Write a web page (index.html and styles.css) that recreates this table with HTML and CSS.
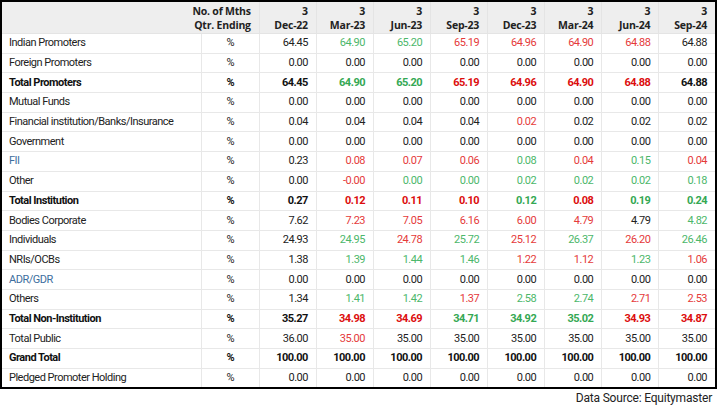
FILE: index.html
```html
<!DOCTYPE html>
<html>
<head>
<meta charset="utf-8">
<link rel="stylesheet" href="styles.css">
</head>
<body>
<div class="wrap">
<table class="sh">
<colgroup>
<col class="c-label"><col class="c-unit"><col class="c-num"><col class="c-num"><col class="c-num"><col class="c-num"><col class="c-num"><col class="c-num"><col class="c-num"><col class="c-num">
</colgroup>
<thead>
<tr>
<th colspan="2" class="unit-h">No. of Mths<br>Qtr. Ending</th>
<th>3<br>Dec-22</th><th>3<br>Mar-23</th><th>3<br>Jun-23</th><th>3<br>Sep-23</th><th>3<br>Dec-23</th><th>3<br>Mar-24</th><th>3<br>Jun-24</th><th>3<br>Sep-24</th>
</tr>
</thead>
<tbody>
<tr><td>Indian Promoters</td><td>%</td><td>64.45</td><td class="g">64.90</td><td class="g">65.20</td><td class="r">65.19</td><td class="r">64.96</td><td class="r">64.90</td><td class="r">64.88</td><td>64.88</td></tr>
<tr><td>Foreign Promoters</td><td>%</td><td>0.00</td><td>0.00</td><td>0.00</td><td>0.00</td><td>0.00</td><td>0.00</td><td>0.00</td><td>0.00</td></tr>
<tr class="tot"><td>Total Promoters</td><td>%</td><td>64.45</td><td class="g">64.90</td><td class="g">65.20</td><td class="r">65.19</td><td class="r">64.96</td><td class="r">64.90</td><td class="r">64.88</td><td>64.88</td></tr>
<tr><td>Mutual Funds</td><td>%</td><td>0.00</td><td>0.00</td><td>0.00</td><td>0.00</td><td>0.00</td><td>0.00</td><td>0.00</td><td>0.00</td></tr>
<tr><td>Financial institution/Banks/Insurance</td><td>%</td><td>0.04</td><td>0.04</td><td>0.04</td><td>0.04</td><td class="r">0.02</td><td>0.02</td><td>0.02</td><td>0.02</td></tr>
<tr><td>Government</td><td>%</td><td>0.00</td><td>0.00</td><td>0.00</td><td>0.00</td><td>0.00</td><td>0.00</td><td>0.00</td><td>0.00</td></tr>
<tr><td class="lnk">FII</td><td>%</td><td>0.23</td><td class="r">0.08</td><td class="r">0.07</td><td class="r">0.06</td><td class="g">0.08</td><td class="r">0.04</td><td class="g">0.15</td><td class="r">0.04</td></tr>
<tr><td>Other</td><td>%</td><td>0.00</td><td class="r">-0.00</td><td class="g">0.00</td><td class="g">0.00</td><td class="g">0.02</td><td class="g">0.02</td><td class="g">0.02</td><td class="g">0.18</td></tr>
<tr class="tot"><td>Total Institution</td><td>%</td><td>0.27</td><td class="r">0.12</td><td class="r">0.11</td><td class="r">0.10</td><td class="g">0.12</td><td class="r">0.08</td><td class="g">0.19</td><td class="g">0.24</td></tr>
<tr><td>Bodies Corporate</td><td>%</td><td>7.62</td><td class="r">7.23</td><td class="r">7.05</td><td class="r">6.16</td><td class="r">6.00</td><td class="r">4.79</td><td>4.79</td><td class="g">4.82</td></tr>
<tr><td>Individuals</td><td>%</td><td>24.93</td><td class="g">24.95</td><td class="r">24.78</td><td class="g">25.72</td><td class="r">25.12</td><td class="g">26.37</td><td class="r">26.20</td><td class="g">26.46</td></tr>
<tr><td>NRIs/OCBs</td><td>%</td><td>1.38</td><td class="g">1.39</td><td class="g">1.44</td><td class="g">1.46</td><td class="r">1.22</td><td class="r">1.12</td><td class="g">1.23</td><td class="r">1.06</td></tr>
<tr><td class="lnk">ADR/GDR</td><td>%</td><td>0.00</td><td>0.00</td><td>0.00</td><td>0.00</td><td>0.00</td><td>0.00</td><td>0.00</td><td>0.00</td></tr>
<tr><td>Others</td><td>%</td><td>1.34</td><td class="g">1.41</td><td class="g">1.42</td><td class="r">1.37</td><td class="g">2.58</td><td class="g">2.74</td><td class="r">2.71</td><td class="r">2.53</td></tr>
<tr class="tot"><td>Total Non-Institution</td><td>%</td><td>35.27</td><td class="r">34.98</td><td class="r">34.69</td><td class="g">34.71</td><td class="g">34.92</td><td class="g">35.02</td><td class="r">34.93</td><td class="r">34.87</td></tr>
<tr><td>Total Public</td><td>%</td><td>36.00</td><td class="r">35.00</td><td>35.00</td><td>35.00</td><td>35.00</td><td>35.00</td><td>35.00</td><td>35.00</td></tr>
<tr class="tot"><td>Grand Total</td><td>%</td><td>100.00</td><td>100.00</td><td>100.00</td><td>100.00</td><td>100.00</td><td>100.00</td><td>100.00</td><td>100.00</td></tr>
<tr><td>Pledged Promoter Holding</td><td>%</td><td>0.00</td><td>0.00</td><td>0.00</td><td>0.00</td><td>0.00</td><td>0.00</td><td>0.00</td><td>0.00</td></tr>
</tbody>
</table>
<div class="src">Data Source: Equitymaster</div>
</div>
</body>
</html>
```

FILE: styles.css
```css
html, body {
  margin: 0;
  padding: 0;
  background: #fff;
}
.wrap {
  width: 717px;
}
.sh {
  width: 717px;
  border-collapse: collapse;
  table-layout: fixed;
  border: 2px solid #000;
  font-family: Roboto, "Liberation Sans", sans-serif;
  font-size: 11px;
  letter-spacing: -0.5px;
  color: #222;
}
.c-label { width: 200px; }
.c-unit { width: 58px; }
.c-num { width: 57px; }
.sh thead tr {
  background: #eeeeee;
}
.sh th {
  height: 31px;
  padding: 0 8px 0 0;
  text-align: right;
  vertical-align: middle;
  font-family: "Open Sans", "Liberation Sans", sans-serif;
  font-weight: 700;
  font-size: 10.5px;
  letter-spacing: -0.2px;
  line-height: 14px;
  color: #222;
  border-left: 1px solid #e4e4e4;
  border-bottom: 1px solid #e4e4e4;
  white-space: nowrap;
}
.sh th.unit-h { border-left: none; }
.sh td {
  height: 18.7px;
  padding: 0 8px 0 0;
  text-align: right;
  vertical-align: middle;
  line-height: 14px;
  border-left: 1px solid #e8e8e8;
  border-bottom: 1px solid #e8e8e8;
  white-space: nowrap;
}
.sh td:first-child {
  text-align: left;
  padding-left: 7px;
  border-left: none;
}
.sh td:nth-child(2) {
  text-align: center;
  padding: 0;
}
.sh tbody tr:last-child td { border-bottom: none; }
.tot td { font-weight: 700; color: #111; }
.lnk { color: #3d6e9e; }
.g { color: #4cb76a; }
.r { color: #e53a3a; }
.tot .g { color: #34a853; }
.tot .r { color: #dc0d0d; }
.src {
  text-align: right;
  padding-right: 5px;
  font-family: Roboto, "Liberation Sans", sans-serif;
  font-size: 12px;
  letter-spacing: -0.2px;
  line-height: 18px;
  color: #222;
}
```
